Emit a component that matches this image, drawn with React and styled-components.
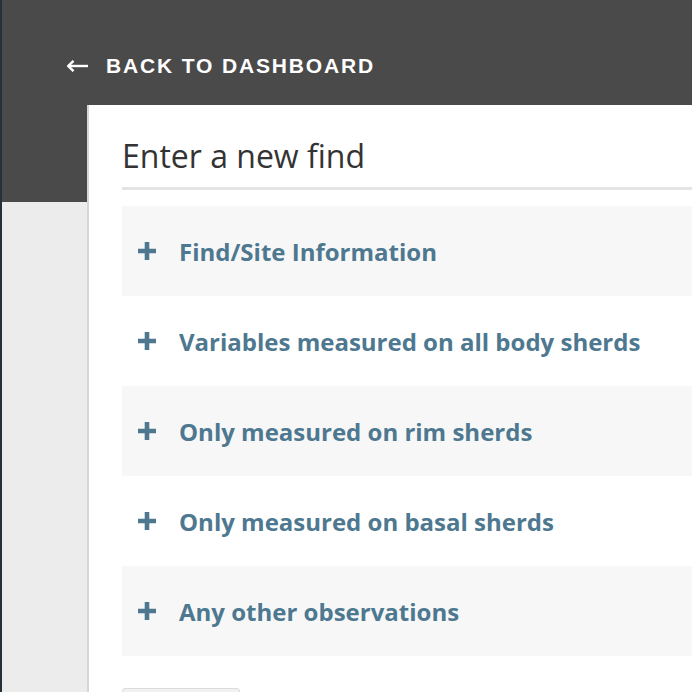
import React from "react";
import styled, { createGlobalStyle } from "styled-components";

const GlobalStyle = createGlobalStyle`
  html, body {
    margin: 0;
    padding: 0;
    background: #ececec;
    overflow: hidden;
  }
  body {
    border-left: 2px solid #26323a;
  }
`;

const Page = styled.div`
  min-height: 692px;
  background: #ececec;
`;

const Header = styled.header`
  height: 202px;
  background: #4a4a4a;
  padding: 54px 0 0 65px;
  box-sizing: border-box;
`;

const BackLink = styled.a`
  display: inline-flex;
  align-items: center;
  gap: 18px;
  color: #ffffff;
  font-family: "Liberation Sans", Arial, sans-serif;
  font-weight: 700;
  font-size: 21px;
  letter-spacing: 1.85px;
  text-transform: uppercase;
  text-decoration: none;
`;

const Panel = styled.main`
  margin: -97px 0 0 85px;
  background: #ffffff;
  border-left: 2px solid #d6d6d6;
  padding: 31px 0 40px 33px;
`;

const Title = styled.h1`
  margin: 0;
  padding-bottom: 11px;
  border-bottom: 3px solid #e4e4e4;
  font-family: "Open Sans", sans-serif;
  font-weight: 400;
  font-size: 32px;
  line-height: 40px;
  color: #333333;
`;

const Sections = styled.div`
  margin-top: 16px;
  display: flex;
  flex-direction: column;
`;

const Section = styled.button`
  display: flex;
  align-items: center;
  gap: 22px;
  height: 90px;
  padding: 0 0 0 15px;
  border: none;
  background: ${props => (props.shaded ? "#f7f7f7" : "#ffffff")};
  color: #4d7890;
  font-family: "Open Sans", sans-serif;
  font-weight: 700;
  font-size: 24px;
  text-align: left;
  cursor: pointer;
`;

const Plus = styled.svg`
  width: 20px;
  height: 20px;
  flex-shrink: 0;
`;

const SubmitButton = styled.button`
  margin-top: 32px;
  width: 118px;
  height: 40px;
  border: 1px solid #dcdcdc;
  border-radius: 3px;
  background: #f1f1f1;
`;

const sections = [
  "Find/Site Information",
  "Variables measured on all body sherds",
  "Only measured on rim sherds",
  "Only measured on basal sherds",
  "Any other observations",
];

const App = () => (
  <Page>
    <GlobalStyle />
    <Header>
      <BackLink href="#">
        <svg width="21" height="12" viewBox="0 0 21 12">
          <path d="M1 6 H21" stroke="#fff" strokeWidth="2.4" />
          <path d="M6.5 0.8 L1.3 6 L6.5 11.2" stroke="#fff" strokeWidth="2.4" fill="none" />
        </svg>
        Back to Dashboard
      </BackLink>
    </Header>
    <Panel>
      <Title>Enter a new find</Title>
      <Sections>
        {sections.map((name, i) => (
          <Section key={name} shaded={i % 2 === 0}>
            <Plus viewBox="0 0 20 20">
              <path d="M10 1 V19 M1 10 H19" stroke="#4d7890" strokeWidth="4.6" />
            </Plus>
            {name}
          </Section>
        ))}
      </Sections>
      <SubmitButton />
    </Panel>
  </Page>
);

export default App;
